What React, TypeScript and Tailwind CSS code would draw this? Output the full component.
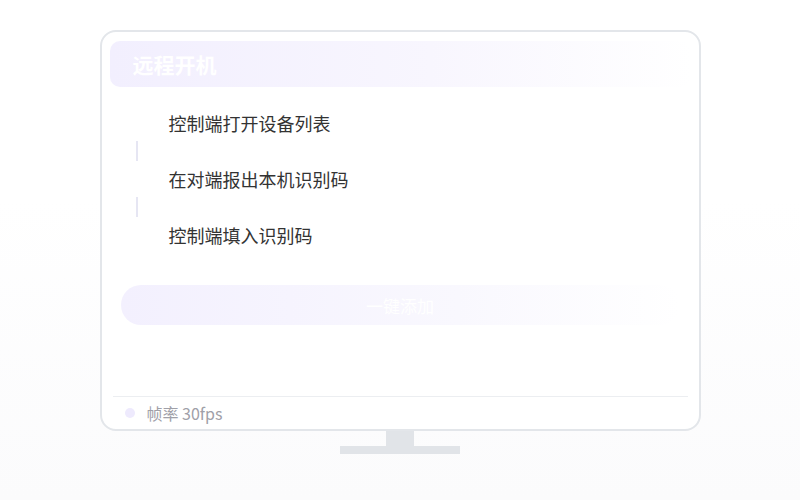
import React from "react";

const steps = ["控制端打开设备列表", "在对端报出本机识别码", "控制端填入识别码"];

export default function App() {
  return (
    <div
      className="w-[800px] h-[500px] bg-linear-to-b from-white from-40% to-[#fbfbfc] flex flex-col items-center pt-[30px]"
      style={{ fontFamily: '"Noto Sans CJK SC", "Noto Sans", sans-serif' }}
    >
      <div className="w-[601px] h-[401px] border-2 border-[#e3e6ea] rounded-[16px] bg-white flex flex-col px-[8px] pt-[9px]">
        <div className="h-[46px] shrink-0 rounded-[10px] bg-linear-to-r from-[#f2effe] via-[#f8f6fe] via-55% to-white flex items-center pl-[23px]">
          <span className="text-white text-[21px] font-bold leading-none">远程开机</span>
        </div>

        <div className="flex flex-col mt-[18px] ml-[26px]">
          {steps.map((s, i) => (
            <React.Fragment key={s}>
              {i > 0 && <div className="w-[2px] h-[20px] bg-[#e6e6f3]" />}
              <div className="h-[36px] flex items-center">
                <span className="ml-[33px] text-[18px] text-[#333333] leading-none">{s}</span>
              </div>
            </React.Fragment>
          ))}
        </div>

        <div className="mt-[32px] mx-[11px] h-[40px] rounded-full bg-linear-to-r from-[#f3f0fe] via-[#f9f8fe] via-60% to-white flex items-center justify-center">
          <span className="text-white text-[17px] leading-none">一键添加</span>
        </div>

        <div className="flex-1" />

        <div className="h-[33px] mx-[3px] border-t border-[#eceef1] flex items-center pl-[12px] gap-[12px]">
          <div className="w-[10px] h-[10px] rounded-full bg-[#eeeafd]" />
          <span className="text-[16px] text-[#a0a0a8] leading-none">帧率 30fps</span>
        </div>
      </div>
      <div className="w-[28px] h-[15px] bg-[#e1e4e8]" />
      <div className="w-[120px] h-[8px] bg-[#e1e4e8]" />
    </div>
  );
}
